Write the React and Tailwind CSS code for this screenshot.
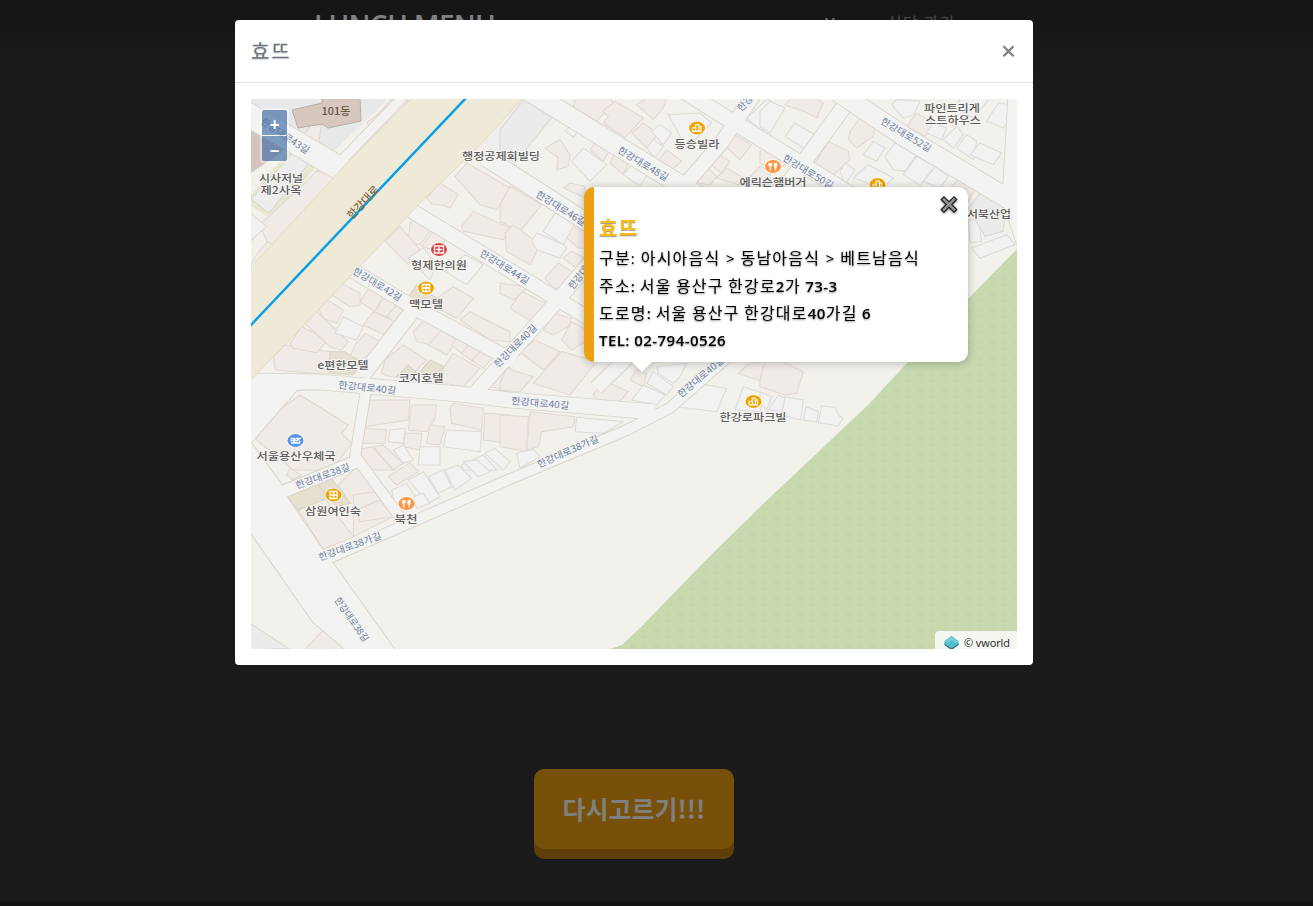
import React from "react";

// Building footprints, grouped by 260px map tile; coordinates are thirds of a pixel.
const tiles = [
  {
    x: 250, y: 98,
    pink: ["388,45 422,5 475,8 432,65", "350,75 385,48 418,82 385,110", "275,170 355,85 385,110 300,188", "165,255 200,218 262,235 120,395 60,455 30,380", "30,455 55,430 100,470 40,530 0,500", "530,300 570,255 625,290 600,330 580,322 545,318", "615,235 650,195 780,270 740,335 690,320", "635,385 670,340 780,390 760,425 640,400", "480,375 500,360 545,395 510,440 475,435", "405,430 450,385 510,455 475,500", "515,445 550,400 590,420 560,460", "160,110 185,80 215,80 205,140 180,135"],
    white: ["585,520 645,470 700,500 650,560", "475,480 520,450 560,500 540,545", "0,345 50,385 0,430"],
    grey: [],
    tan: [],
  },
  {
    x: 500, y: 98,
    pink: ["225,0 330,0 340,15 290,70 220,30", "345,10 430,60 375,118 310,75 325,55 308,40", "440,0 500,0 490,30 460,65 410,20", "395,105 430,75 475,110 440,150", "470,195 500,155 545,190 520,212", "135,150 180,125 210,170 205,205 170,215 175,180", "270,155 290,130 330,155 310,190", "330,195 350,155 390,180 370,230", "0,320 30,265 125,320 60,400 0,370", "190,270 210,255 255,265 255,300", "15,405 40,380 120,440 90,500 20,460", "190,410 215,385 255,400 255,450 235,450", "190,480 215,460 255,480 235,515", "620,190 650,165 690,190 665,225", "660,130 690,102 755,140 720,185", "650,240 680,210 730,240 720,262", "750,235 780,205 810,220 810,265", "545,245 600,190 650,235 630,262", "135,540 175,495 230,530 200,570 160,570"],
    white: ["455,100 480,80 515,105 490,140", "440,150 460,125 490,145 465,180", "505,50 600,45 635,75 560,150", "195,98 210,85 233,100 220,117", "215,190 250,150 320,200 270,250", "370,230 400,190 450,215 420,265", "130,400 165,345 225,375 190,440", "95,430 110,405 190,440 200,450 180,480 110,455", "740,60 800,5 810,5 810,95 780,95"],
    grey: ["0,95 72,5 155,58 45,195 0,165"],
    tan: [],
  },
  {
    x: 760, y: 98,
    pink: ["75,20 95,0 165,0 190,15 170,60 130,40", "270,100 300,60 345,90 340,115 290,150 265,125", "160,205 205,130 265,160 270,185 215,235", "0,160 40,130 95,165 75,200 40,220 0,195", "440,85 470,45 520,75 495,115", "560,280 600,240 650,265 620,320"],
    white: ["75,115 105,75 165,110 145,150 130,150", "0,40 30,10 75,30 30,105 0,85", "240,220 255,195 285,215 255,260", "375,175 405,135 470,170 435,220 400,215", "430,230 470,175 525,205 480,262", "490,250 525,205 565,235 540,270", "280,240 325,200 400,240 370,270", "310,170 340,130 375,150 350,190", "395,20 410,5 480,10 460,50 430,60", "500,105 520,75 560,90 545,125", "550,125 590,85 610,110 580,150", "590,150 620,110 650,130 640,185", "630,170 660,135 725,165 700,200", "680,70 715,15 755,20 760,50 730,90", "600,0 690,0 640,60 590,30", "625,365 655,365 665,430 630,435", "635,450 740,410 765,440 660,480"],
    grey: ["625,330 670,275 740,310 730,400 675,415"],
    tan: [],
  },
  {
    x: 250, y: 280,
    pink: ["75,265 70,230 105,195 240,215 240,285 80,270", "120,190 155,140 235,180 200,218 130,205", "165,130 195,90 295,185 275,210 240,200", "200,75 225,55 280,90 260,130 220,115", "245,45 275,10 330,40 330,75 300,80", "330,65 360,20 400,45 375,95", "375,95 405,50 460,65 430,120", "340,135 370,95 435,125 405,165", "315,195 345,160 400,190 350,245 300,230", "410,110 440,75 475,95 450,135", "395,280 405,240 460,195 530,240 480,290 420,290", "490,155 525,118 580,155 545,195 500,185", "535,195 575,150 625,180 590,225", "560,290 610,220 690,265 640,320 560,305", "605,195 620,175 655,195 640,225", "635,220 660,190 695,210 670,245", "665,240 695,210 730,230 700,265", "560,55 610,20 670,55 620,115 545,75", "630,120 660,95 780,155 780,185 720,180", "715,320 780,260 780,330", "20,440 150,345 295,435 275,460 305,490 245,570 130,570 20,480", "360,360 480,360 475,420 345,440", "485,375 560,375 555,415 530,455 475,450", "600,385 610,370 700,385 695,450 605,430", "705,400 780,405 780,490 700,480", "345,445 410,450 405,490 338,490", "465,460 515,460 510,510 460,500", "540,435 585,440 570,495 530,490", "325,510 365,500 430,570 360,570", "370,500 400,495 460,550 430,570"],
    white: ["255,160 280,110 340,140 320,180 290,170", "420,450 465,445 460,490 415,485", "590,450 695,455 690,515 580,500", "510,500 570,500 570,555 505,555", "430,510 460,495 490,540 460,550", "635,555 700,525 740,570 640,570", "705,520 735,505 780,545 760,570"],
    grey: [],
    tan: ["240,215 285,215 330,245 310,285 240,280", "440,290 475,255 500,280 480,300", "510,275 540,240 582,260 560,300 530,300", "475,50 500,15 560,55 540,75"],
  },
  {
    x: 500, y: 280,
    pink: ["0,10 85,20 40,60 0,40", "30,85 65,35 140,70 95,125", "60,215 105,180 180,215 130,270", "130,150 165,100 215,115 205,140 160,165", "185,180 215,125 260,150 255,185 215,210", "100,310 185,215 290,245 210,345", "0,310 20,265 100,290 60,335 0,330", "280,345 310,300 385,335 360,365 290,360", "390,300 410,270 440,280 430,320", "715,280 740,255 800,240 860,290 830,320", "0,405 85,410 80,515 0,500", "90,395 225,410 220,440 125,455 115,500 80,510"],
    white: ["395,360 430,315 495,345 470,375", "440,310 460,275 520,320 500,345", "470,260 560,250 540,290 520,310 475,280", "530,380 590,310 680,325 650,395", "230,412 370,425 310,460 225,455", "50,520 100,508 120,530 60,565", "705,390 730,320 790,340 780,395"],
    grey: [],
    tan: [],
  },
  {
    x: 250, y: 460,
    pink: ["145,150 225,115 310,230 220,268", "265,75 320,20 360,60 375,95 300,130", "310,105 375,95 430,170 310,230", "320,150 390,120 430,170 330,185", "120,25 155,45 130,60 110,45", "415,50 480,8 505,35 440,75", "165,568 220,510 285,568"],
    white: ["425,90 470,70 495,110 440,160", "475,60 520,35 570,110 535,130", "535,50 580,30 605,80 565,100", "585,30 625,15 665,55 615,90", "640,5 680,0 720,35 685,50", "490,110 520,100 540,130 500,145"],
    grey: ["0,490 115,565 0,570"],
    tan: ["110,110 205,70 230,115 145,150", "200,70 240,50 300,130 260,140"],
  },
  {
    x: 760, y: 360,
    pink: ["0,60 15,5 70,5 130,35 110,100 75,105 0,80"],
    white: ["0,95 35,110 20,150 0,130", "25,150 55,105 75,115 65,155", "75,110 130,120 122,180 65,165", "138,140 175,155 170,185 130,180", "185,138 225,142 235,165 248,175 235,198 175,188"],
    grey: [],
    tan: [],
  },
];

// Centre line and width of each street.
const roads = [
  ["M240 110L346 172", 23],
  ["M342 160L405 95", 9],
  ["M530 92L705 200", 19],
  ["M757 90L722 142L672 200", 14],
  ["M685 92L850 194", 15],
  ["M843 108L785 188", 15],
  ["M838 92L905 137L1030 212", 19],
  ["M1016 95L1010 200L1030 260", 15],
  ["M485 157L610 237", 17],
  ["M412 211L595 322", 14],
  ["M338 262L415 308L515 362", 14],
  ["M476 392L545 315L605 245", 14],
  ["M362 376L418 304", 15],
  ["M250 381L320 382L460 394L510 400L655 412", 15],
  ["M596 388L640 345", 14],
  ["M728 357L670 408L627 430L510 479L325 560", 10],
  ["M366 390L355 456L400 517", 10],
  ["M280 493L360 460", 12],
];

// Wide junctions that the street lines run into.
const junctions = [
  "M240 433L251 443L282 485L287 497L323 550L335 566L395 650H346L313 622L251 533H240Z",
  "M240 374L300 376L320 388L297 390L251 443L240 450Z",
];

const roadLabels = [
  ["한강대로43길", 260, 123, 34, 56], ["한강대로48길", 617, 152, 31, 57],
  ["한강대로46길", 535, 196, 32, 57], ["한강대로44길", 479, 255, 32, 56],
  ["한강대로42길", 352, 273, 31, 55], ["한강대로50길", 782, 160, 31, 57],
  ["한강대로52길", 880, 123, 31, 57], ["한강대로40길", 338, 388, 6, 58],
  ["한강대로40길", 511, 404, 5, 58], ["한강대로40길", 498, 368, -45, 56],
  ["한강대로40길", 573, 290, -52, 54], ["한강대로40길", 681, 398, -40, 57],
  ["한강대로38가길", 539, 468, -24, 66], ["한강대로38길", 297, 489, -20, 57],
  ["한강대로38가길", 320, 561, -20, 66], ["한강대로38길", 334, 600, 55, 52],
  ["한강", 741, 112, -45, 18],
];

const places = [
  ["101동", 336, 115, 29, "#6b5846"], ["행정공제회빌딩", 501, 160, 78], ["시사저널", 281, 182, 44], ["제2사옥", 281, 194, 41],
  ["등승빌라", 697, 148, 45], ["에릭슨햄버거", 773, 186, 67], ["파인트리게", 952, 112, 56], ["스트하우스", 953, 124, 56],
  ["서북산업", 989, 218, 44], ["형제한의원", 439, 269, 56], ["맥모텔", 426, 308, 34], ["e편한모텔", 343, 369, 51],
  ["코지호텔", 421, 382, 45], ["서울용산우체국", 296, 460, 79], ["삼원여인숙", 333, 515, 56], ["북천", 406, 523, 23], ["한강로파크빌", 753, 421, 67],
];

function Poi({ x, y, color, children }) {
  return (
    <g transform={`translate(${x} ${y})`}>
      <ellipse rx="9" ry="7.3" fill="#fff" opacity=".7" />
      <ellipse rx="8" ry="6.5" fill={color} />
      <g fill="none" stroke="#fff" strokeWidth="1.3">{children}</g>
    </g>
  );
}

const Villa = () => <path strokeWidth="1.1" d="M-4.3 3.2V-.2H-1.2V3.2M-1.2 3.2V-3.5H1.8V3.2M1.8-1.5H4V3.2M-4.8 3.4H4.6" />;
const Fork = () => <path d="M-4-3.5V-1H-1.4V-3.5M-2.7-3V4M2.5-3V4M1.6-3H3.4V0H1.6Z" />;
const Hotel = () => <path d="M-3.5-3.5H3.5V3.5H-3.5ZM0-3.5V3M-3 0H3" />;

function MapDrawing() {
  return (
    <svg className="block h-full w-full" viewBox="251 99 766 550" fontFamily="'Noto Sans CJK KR', sans-serif">
      <defs>
        <pattern id="forest" width="12" height="16" x="3" y="4" patternUnits="userSpaceOnUse">
          <path d="M3 3.5L5.5 1.8L8 3.5M3.5 9.5L5.5 8L7.5 9.5" fill="none" stroke="#bccda5" strokeWidth=".9" />
        </pattern>
      </defs>
      <path d="M251 99H1017V649H251Z" fill="#f3f1ec" />
      <path d="M251 99H388L333 152L251 103Z" fill="#e7e8e9" />
      <path d="M483 142L523 99L560 119L505 160Z" fill="#eeeeed" />
      <path d="M251 128L285 150L251 173Z" fill="#d5c4bd" />
      <path d="M291 148L317 165L273 220L251 206V195Z" fill="#e9e7cf" />
      <path d="M293 153L310 162L269 213L251 199Z" fill="#ededed" stroke="#d5d3cc" />
      {tiles.map((t, i) => (
        <g key={i} transform={`translate(${t.x} ${t.y}) scale(.33333)`} strokeWidth="3.2">
          {t.pink.map((p) => <polygon key={p} points={p} fill="#f1ebe8" stroke="#e1d8d2" />)}
          {t.white.map((p) => <polygon key={p} points={p} fill="#f2f2f2" stroke="#dddbd8" />)}
          {t.grey.map((p) => <polygon key={p} points={p} fill="#ebebeb" stroke="#d9d8d4" />)}
          {t.tan.map((p) => <polygon key={p} points={p} fill="#e6e0d1" stroke="#dad3c4" />)}
        </g>
      ))}
      <path d="M292 110L322 103V98H360L361 121L328 128L322 124L298 128Z" fill="#d8c7bf" stroke="#b9aca5" />
      {junctions.map((d) => <path key={d} d={d} fill="none" stroke="#d5d3c6" strokeWidth="1.8" />)}
      {roads.map(([d, w]) => <path key={d} d={d} fill="none" stroke="#d8d5c8" strokeWidth={w + 1.8} strokeLinejoin="round" />)}
      {junctions.map((d) => <path key={d} d={d} fill="#f3f3f2" />)}
      {roads.map(([d, w]) => <path key={d} d={d} fill="none" stroke="#f3f3f2" strokeWidth={w} strokeLinejoin="round" />)}
      <path d="M412 98L350 160L250 268V381L347 280L420 203L483 142L523 98Z" fill="#efe9d8" stroke="#e2dbc0" />
      <path d="M1017 249L967 300L908 362L868 405L760 507L708 558L640 628L622 645L610 649H1017Z" fill="#c8d8af" />
      <path d="M1017 249L967 300L908 362L868 405L760 507L708 558L640 628L622 645L610 649H1017Z" fill="url(#forest)" />
      <path d="M466 98L250 326" stroke="#0aa0e8" strokeWidth="2.5" />
      {roadLabels.map(([t, x, y, a, w], i) => (
        <text key={i} transform={`translate(${x} ${y}) rotate(${a})`} textLength={w} lengthAdjust="spacingAndGlyphs" fontSize="9.5" fill="#6c7f9f" stroke="#f3f3f2" strokeWidth="2" paintOrder="stroke">{t}</text>
      ))}
      <text transform="translate(352 220) rotate(-47)" fontSize="11" fontWeight="500" fill="#856a3d" textLength="41" lengthAdjust="spacingAndGlyphs">한강대로</text>
      {places.map(([t, x, y, w, c]) => (
        <text key={t} x={x} y={y} textAnchor="middle" textLength={w} lengthAdjust="spacingAndGlyphs" fontSize="10.5" fontWeight="500" fill={c || "#5c5c5c"} stroke={c ? "none" : "#f5f4f1"} strokeWidth="2" paintOrder="stroke">{t}</text>
      ))}
      <Poi x={697} y={128} color="#eea502"><Villa /></Poi>
      <Poi x={877.5} y={184.5} color="#eea502"><Villa /></Poi>
      <Poi x={753.5} y={401.5} color="#eea502"><Villa /></Poi>
      <Poi x={773} y={166.5} color="#ff963f"><Fork /></Poi>
      <Poi x={406.5} y={503.5} color="#ff963f"><Fork /></Poi>
      <Poi x={426} y={288} color="#eea502"><Hotel /></Poi>
      <Poi x={333.5} y={495} color="#eea502"><Hotel /></Poi>
      <Poi x={439} y={249.5} color="#dd4142"><path d="M-4.5-3.5H4.5V3.5H-4.5ZM0-2.5V2.5M-2.7 0H2.7" /></Poi>
      <Poi x={295.5} y={440.5} color="#5597e8"><path d="M-5-2H-2L1 .5L4.5-2H0M-5 0H-2L0 2.5H4V0M-4.5 2.5H-1" /></Poi>
    </svg>
  );
}

const lines = [
  ["구분: 아시아음식 > 동남아음식 > 베트남음식", "font-normal [word-spacing:1.2px]"],
  ["주소: 서울 용산구 한강로2가 73-3", "font-semibold"],
  ["도로명: 서울 용산구 한강대로40가길 6", "font-semibold"],
  ["TEL: 02-794-0526", "font-semibold tracking-[0.38px]"],
];

function InfoPopup() {
  return (
    <div className="absolute left-[333px] top-[88px] h-[175px] w-[384px] rounded-[10px] border-l-[10px] border-[#ee9f12] bg-white pl-[5px] pt-[27px] drop-shadow-[0_1px_4px_rgba(0,0,0,0.25)]">
      <h5 className="h-[30px] text-[20px] font-bold leading-[27px] tracking-[1.5px] text-[#fdbb0b] [text-shadow:0_1px_1px_#999]">효뜨</h5>
      {lines.map(([t, style]) => (
        <p key={t} className={`h-[27.5px] whitespace-nowrap font-['Open_Sans','Noto_Sans_CJK_KR',sans-serif] text-[15px] leading-[27px] text-black [text-shadow:0_1px_2px_#888] ${style}`}>
          {[...t.matchAll(/[가-힣]+|[^가-힣]+/g)].map(([s], i) => (
            <span key={i} className={/[가-힣]/.test(s) ? "font-['Noto_Sans_CJK_KR',sans-serif] text-[16px] font-normal tracking-[1.2px]" : "tracking-[0.45px]"}>{s}</span>
          ))}
        </p>
      ))}
      <svg className="absolute right-[9px] top-[8px] h-5 w-5 drop-shadow-[0_1px_1px_rgba(0,0,0,0.5)]" viewBox="0 0 20 20">
        <path d="M3.2 2.7L16.8 16.3M16.8 2.7L3.2 16.3" stroke="#171717" strokeWidth="5" />
        <path d="M4 3.5L16 15.5M16 3.5L4 15.5" stroke="#929292" strokeWidth="2.6" />
      </svg>
      <span className="absolute -bottom-[10px] left-[38px] border-x-[10px] border-t-[10px] border-x-transparent border-t-white" />
    </div>
  );
}

export default function App() {
  return (
    <div className="relative flex h-[906px] w-full flex-col overflow-hidden bg-[#1a1a1a] font-['Noto_Sans_CJK_KR',sans-serif]">
      <header className="flex h-[80px] shrink-0 items-start bg-gradient-to-b from-[#151515] to-[#1a1a1a] pl-[314px]">
        <span className="mt-[7px] w-[510px] whitespace-nowrap font-['Open_Sans',sans-serif] text-[28px] font-semibold leading-9 tracking-[-0.7px] text-[#808080]">LUNCH MENU</span>
        <span className="mt-[11px] w-[63px] text-base font-medium leading-6 text-[#808080]">Home</span>
        <span className="mt-[10px] text-base leading-6 tracking-[1.2px] text-[#4b4b4b]">식당 관리</span>
      </header>
      <main className="flex flex-1 items-start justify-center pr-[45px] pt-[689px]">
        <button className="h-20 w-[200px] rounded-[10px] bg-[#775009] text-[25px] font-bold text-[#808080] shadow-[0_10px_0_#5f3f08]">다시고르기!!!</button>
      </main>
      <footer className="h-[5px] shrink-0 bg-gradient-to-b from-[#171717] to-[#101010]" />
      <div className="absolute inset-0 flex items-start justify-center pr-[45px] pt-5">
        <section className="w-[798px] rounded bg-white">
          <div className="flex h-[63px] items-center justify-between border-b border-[#dee2e6] px-4">
            <h4 className="text-[20px] font-normal leading-[30px] tracking-[1.8px] text-[#6c757d] [text-shadow:0_1px_1px_#bbb]">효뜨</h4>
            <svg className="mr-[2px] h-[13px] w-[13px]" viewBox="0 0 13 13"><path d="M1.5 1.3L11.5 11.3M11.5 1.3L1.5 11.3" stroke="#7f7f7f" strokeWidth="2.3" /></svg>
          </div>
          <div className="p-4">
            <div className="relative h-[550px] w-[766px]">
              <MapDrawing />
              <div className="absolute left-[9px] top-[9px] flex flex-col gap-px rounded bg-white/40 p-[2px] font-['Open_Sans',sans-serif] text-[17px] font-bold text-white">
                <button className="flex h-[25px] w-[25px] items-center justify-center rounded-t-[2px] bg-[#003c88]/50 pt-[4px]">+</button>
                <button className="flex h-[25px] w-[25px] items-center justify-center rounded-b-[2px] bg-[#003c88]/50 pt-[4px]">−</button>
              </div>
              <div className="absolute bottom-0 right-0 flex h-[18px] w-[82px] items-center gap-[5px] overflow-hidden rounded-tl bg-white/80 pl-[9px] pt-[6px] font-['Open_Sans',sans-serif] text-[11px] tracking-[-0.1px] text-[#222]">
                <svg className="h-[14px] w-[15px] shrink-0" viewBox="0 0 15 14"><path d="M.5 7V9L7.5 14L14.5 9V7Z" fill="#3d5868" /><path d="M7.5 0L14.5 5V8L7.5 12.5L.5 8V5Z" fill="#4dbfcf" /><path d="M7.5 0L14.5 5L12 7L7.5 4.5L3 7L.5 5Z" fill="#71cdd8" /></svg>
                <span className="whitespace-nowrap leading-3">© vworld</span>
              </div>
              <InfoPopup />
            </div>
          </div>
        </section>
      </div>
    </div>
  );
}
